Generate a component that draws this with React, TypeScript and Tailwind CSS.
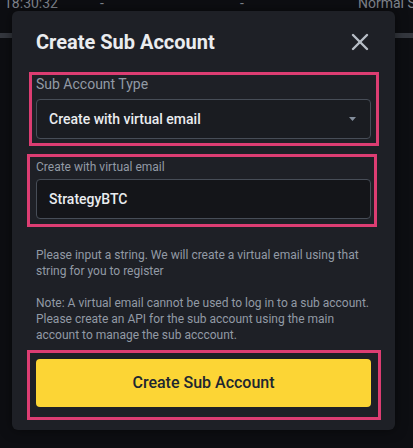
import { X } from "lucide-react";

function Annotation({ className }: { className: string }) {
	// pink highlight frame drawn over the screenshot
	return (
		<div
			className={`pointer-events-none absolute border-[3px] border-[#dc3d72] ${className}`}
		/>
	);
}

export default function App() {
	return (
		<div
			className="relative h-[448px] w-[413px] overflow-hidden bg-[#0d0e12]"
			style={{ fontFamily: "Roboto, 'Noto Sans', sans-serif" }}
		>
			{/* table behind the modal */}
			<div className="-mt-[7px] flex h-[20px] items-center whitespace-nowrap text-[14px] text-[#80858e]">
				<span className="ml-[4px] w-[96px] shrink-0">18:30:32</span>
				<span className="w-[140px] shrink-0">-</span>
				<span className="w-[118px] shrink-0">-</span>
				<span className="shrink-0">Normal Sub</span>
			</div>
			<div className="mt-[20px] h-[5px] bg-[#34373e]" />

			{/* modal */}
			<div className="absolute left-[12px] top-[11px] h-[419px] w-[383px] rounded-[6px] bg-[#1e2026] px-6 pt-[17px] shadow-[0_0_12px_rgba(0,0,0,0.5)]">
				<div className="flex items-center justify-between">
					<h2 className="text-[20px] font-bold leading-7 text-[#eaecef]">
						Create Sub Account
					</h2>
					<X className="mr-[-3px] h-7 w-7 text-[#b7bdc6]" strokeWidth={2.1} />
				</div>

				<div className="relative mt-[18px]">
					<Annotation className="-left-[7px] -right-[8px] -top-[2px] -bottom-[7px]" />
					<div className="text-[14px] leading-5 text-[#929aa5]">Sub Account Type</div>
					<div className="mt-[5px] flex h-10 items-center justify-between rounded-[4px] border border-[#474d57] bg-[#1a1c21] pl-3 pr-[14px]">
						<span className="text-[14px] font-medium text-[#eaecef]">
							Create with virtual email
						</span>
						<svg width="7" height="4" viewBox="0 0 7 4">
							<path d="M0 0h7L3.5 4z" fill="#848e9c" />
						</svg>
					</div>
				</div>

				<div className="relative mt-[20px]">
					<Annotation className="-left-[9px] -right-[6px] -top-[5px] -bottom-[8px]" />
					<div className="text-[12px] leading-4 text-[#929aa5]">
						Create with virtual email
					</div>
					<div className="mt-[4px] flex h-10 items-center rounded-[4px] border border-[#474d57] bg-[#141519] px-3">
						<span className="text-[14px] font-medium text-[#eaecef]">StrategyBTC</span>
					</div>
				</div>

				<div className="mt-[28px] text-[12px] leading-4 text-[#929aa5]">
					<p>
						Please input a string. We will create a virtual email using that
						string for you to register
					</p>
					<p className="mt-4">
						Note: A virtual email cannot be used to log in to a sub account.
						Please create an API for the sub account using the main account to
						manage the sub acccount.
					</p>
				</div>

				<div className="relative mt-4">
					<Annotation className="-left-[9px] -right-[10px] -top-[9px] -bottom-[13px]" />
					<button className="flex h-12 w-full items-center justify-center rounded-[4px] bg-[#fcd535] text-[16px] font-medium text-[#202630]">
						Create Sub Account
					</button>
				</div>
			</div>
		</div>
	);
}
